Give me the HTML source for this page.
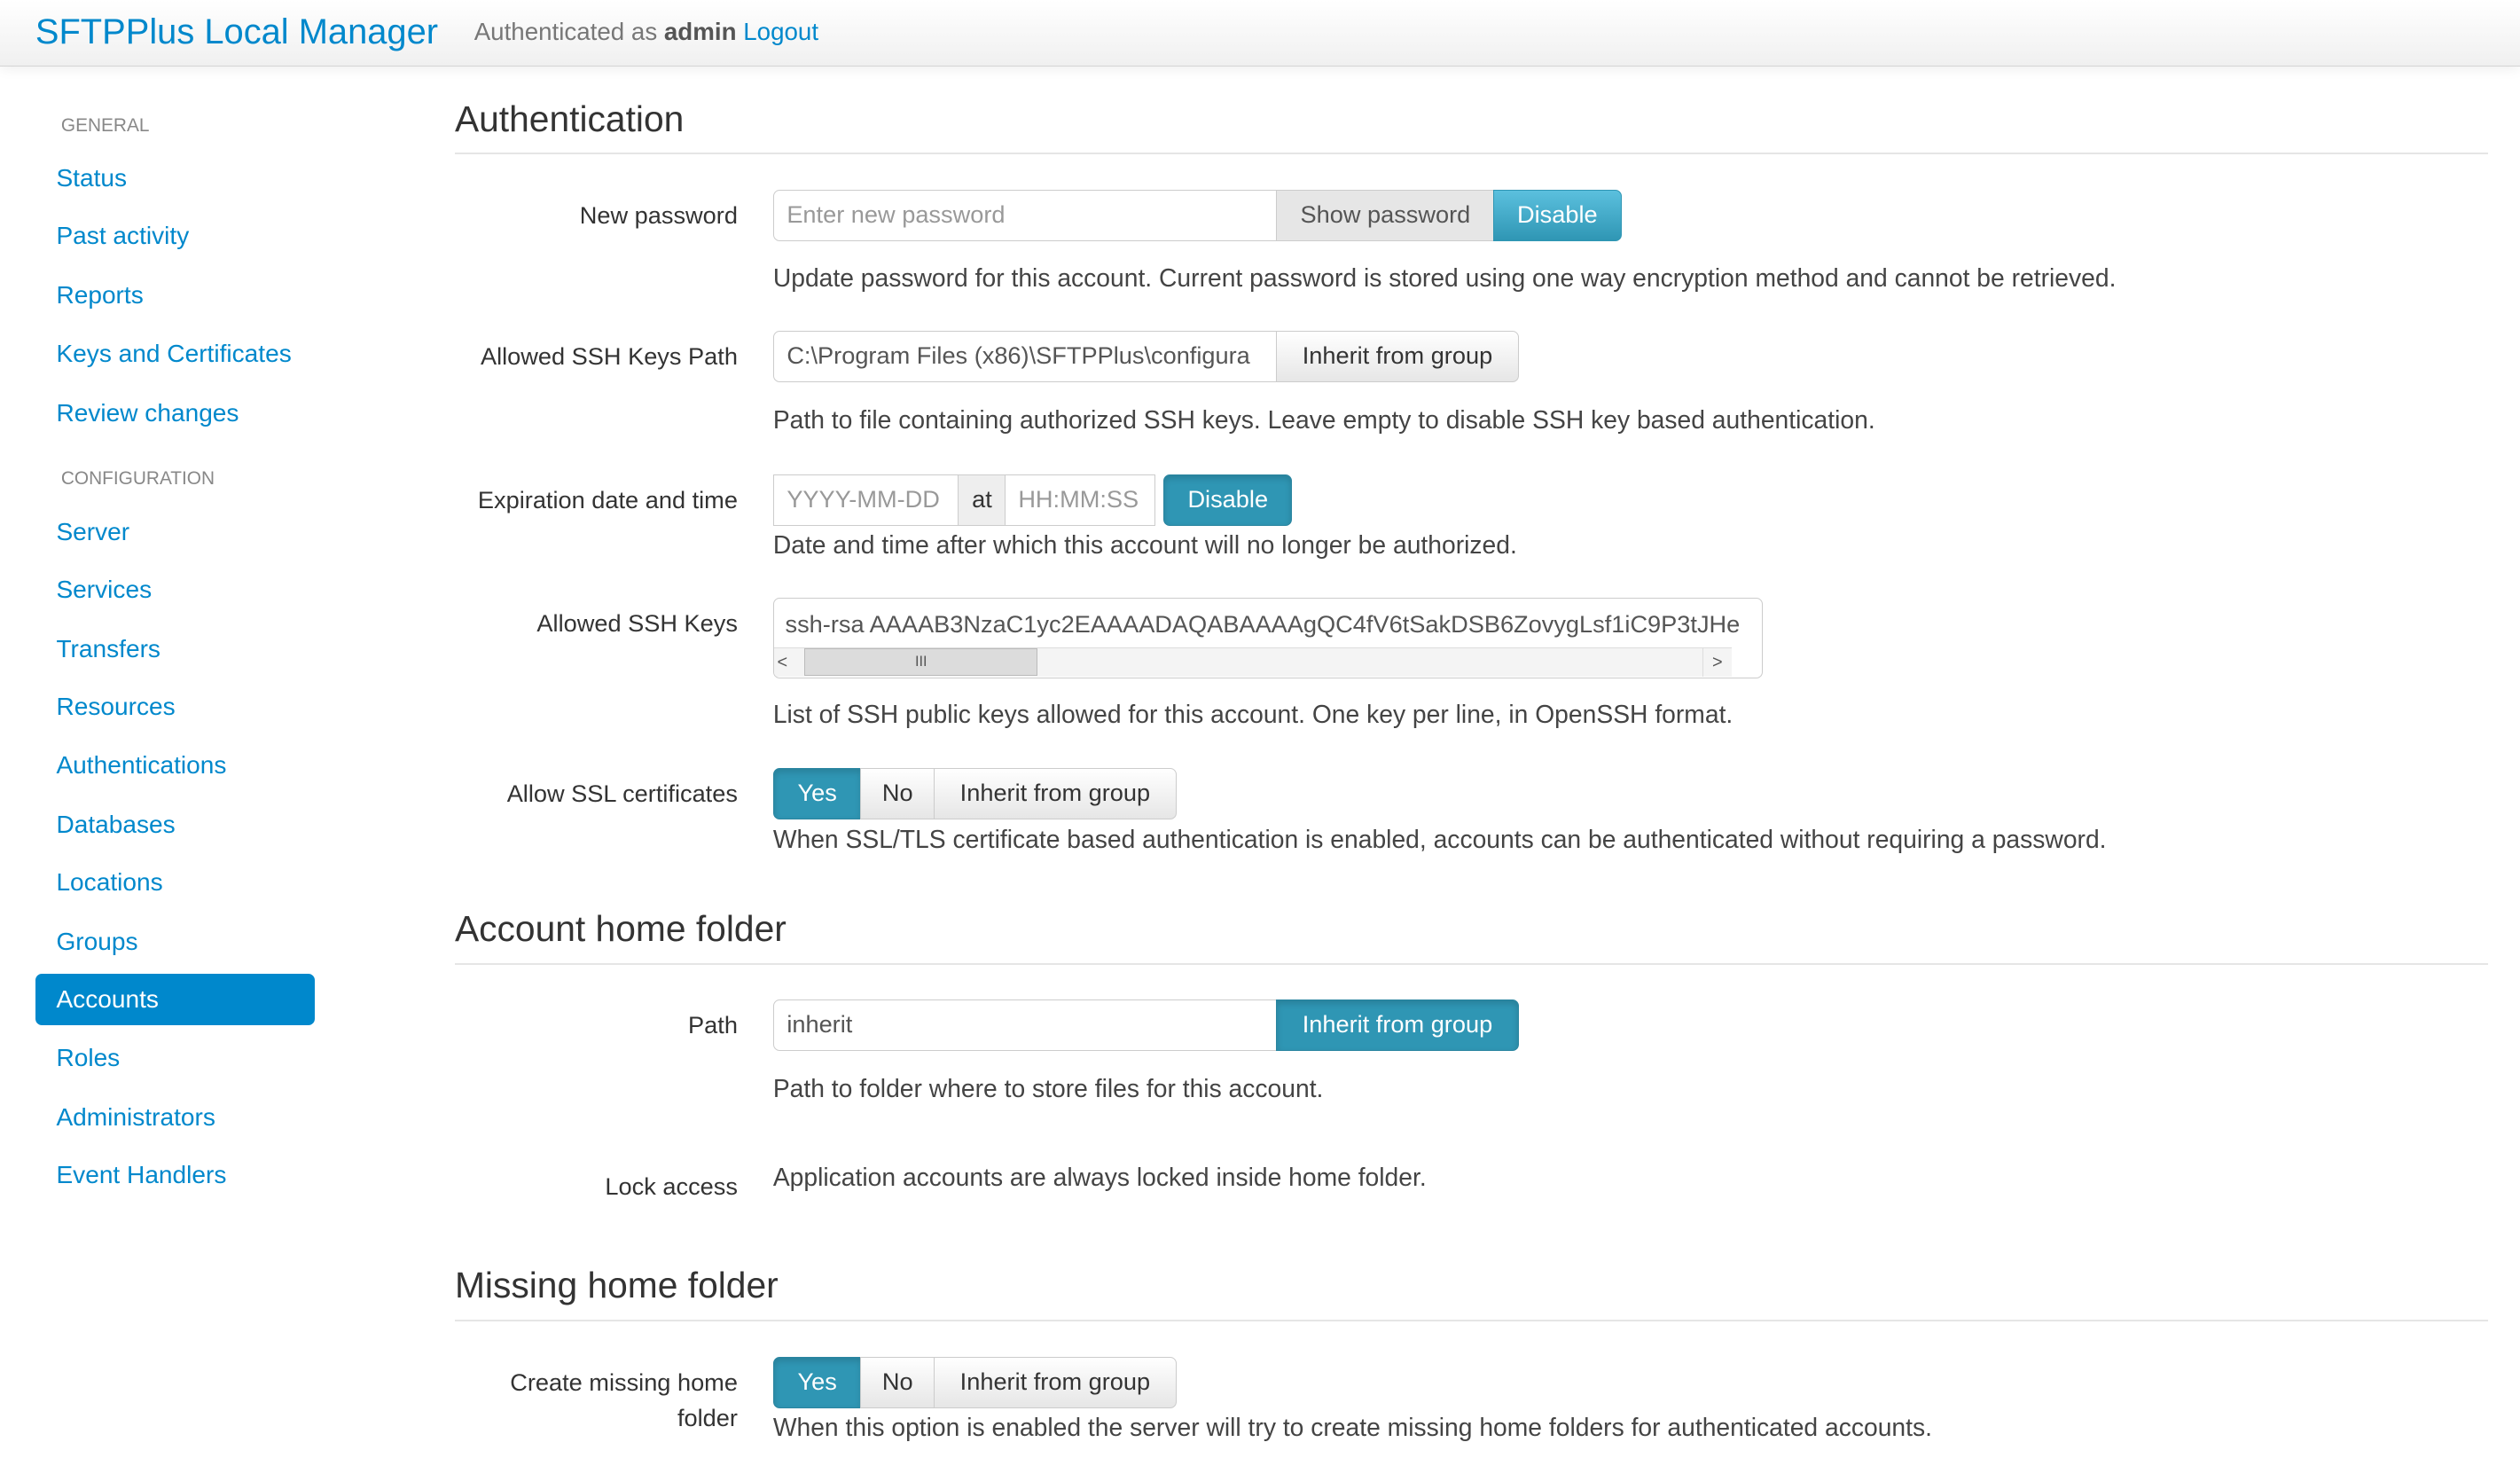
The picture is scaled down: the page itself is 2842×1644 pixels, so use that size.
<!DOCTYPE html>
<html><head><meta charset="utf-8"><style>
html,body{margin:0;padding:0;background:#fff;overflow:hidden}
body{width:1568px;height:907px;zoom:1.8125;position:relative;font-family:"Liberation Sans",Arial,sans-serif;font-size:15px;color:#333}
.a{position:absolute;white-space:nowrap}
.hdr{position:absolute;left:0;top:0;width:1568px;height:41px;background:linear-gradient(#fff,#f0f0f0);border-bottom:1px solid #d4d4d4;box-shadow:0 1px 8px rgba(0,0,0,.08)}
.nav{position:absolute;left:35px;color:#0088cc;line-height:20px;font-size:15.5px}
.cap{position:absolute;left:38px;color:#888;font-size:11.5px;line-height:14px}
h2{position:absolute;left:283px;margin:0;font-weight:normal;font-size:22.5px;color:#333;line-height:26px}
.hr{position:absolute;left:283px;width:1265px;height:1px;background:#e5e5e5}
.lbl{position:absolute;right:1109px;text-align:right;line-height:20px;white-space:nowrap}
.help{position:absolute;left:481px;line-height:20px;white-space:nowrap;color:#444;font-size:15.6px}
.box{position:absolute;box-sizing:border-box;height:32px;line-height:30px;padding:0 8px;border:1px solid #ccc;white-space:nowrap;overflow:hidden}
.inp{background:#fff;border-radius:4px 0 0 4px;color:#555}
.ph{color:#999}
.btn{background:linear-gradient(#fff,#e6e6e6);text-align:center;color:#333;padding:0}
.bi{background:linear-gradient(#5bc0de,#2f96b4);border-color:#2f96b4;color:#fff;text-align:center;padding:0}
.bia{background:#2f96b4;border-color:#2a85a0;color:#fff;text-align:center;padding:0;box-shadow:inset 0 2px 4px rgba(0,0,0,.15)}
</style></head><body>
<div class="hdr"></div>
<div class="a" style="left:22px;top:7px;font-size:22px;color:#0088cc;line-height:26px">SFTPPlus Local Manager</div>
<div class="a" style="left:295px;top:11px;color:#777;line-height:18px;font-size:15.3px">Authenticated as <b style="color:#555">admin</b> <span style="color:#0088cc">Logout</span></div>

<div class="cap" style="top:71px">GENERAL</div>
<div class="nav" style="top:101px">Status</div>
<div class="nav" style="top:137px">Past activity</div>
<div class="nav" style="top:174px">Reports</div>
<div class="nav" style="top:210px">Keys and Certificates</div>
<div class="nav" style="top:247px">Review changes</div>
<div class="cap" style="top:291px">CONFIGURATION</div>
<div class="nav" style="top:321px">Server</div>
<div class="nav" style="top:357px">Services</div>
<div class="nav" style="top:394px">Transfers</div>
<div class="nav" style="top:430px">Resources</div>
<div class="nav" style="top:466px">Authentications</div>
<div class="nav" style="top:503px">Databases</div>
<div class="nav" style="top:539px">Locations</div>
<div class="nav" style="top:576px">Groups</div>
<div class="a" style="left:22px;top:606px;width:174px;height:32px;background:#0088cc;border-radius:4px"></div>
<div class="nav" style="top:612px;color:#fff">Accounts</div>
<div class="nav" style="top:648px">Roles</div>
<div class="nav" style="top:685px">Administrators</div>
<div class="nav" style="top:721px">Event Handlers</div>

<h2 style="top:61px">Authentication</h2>
<div class="hr" style="top:95px"></div>

<div class="lbl" style="top:124px">New password</div>
<div class="box inp" style="left:481px;top:118px;width:314px"><span class="ph">Enter new password</span></div>
<div class="box btn" style="left:794px;top:118px;width:136px;background:#e6e6e6;color:#555">Show password</div>
<div class="box bi" style="left:929px;top:118px;width:80px;border-radius:0 4px 4px 0">Disable</div>
<div class="help" style="top:163px">Update password for this account. Current password is stored using one way encryption method and cannot be retrieved.</div>

<div class="lbl" style="top:212px">Allowed SSH Keys Path</div>
<div class="box inp" style="left:481px;top:206px;width:314px;padding-right:2px">C:\Program Files (x86)\SFTPPlus\configura</div>
<div class="box btn" style="left:794px;top:206px;width:151px;border-radius:0 4px 4px 0">Inherit from group</div>
<div class="help" style="top:251px">Path to file containing authorized SSH keys. Leave empty to disable SSH key based authentication.</div>

<div class="lbl" style="top:301px">Expiration date and time</div>
<div class="box inp" style="left:481px;top:295px;width:116px;border-radius:0"><span class="ph">YYYY-MM-DD</span></div>
<div class="box" style="left:596px;top:295px;width:30px;background:#eee;text-align:center;padding:0">at</div>
<div class="box" style="left:625px;top:295px;width:94px;background:#fff"><span class="ph">HH:MM:SS</span></div>
<div class="box bia" style="left:724px;top:295px;width:80px;border-radius:4px">Disable</div>
<div class="help" style="top:329px">Date and time after which this account will no longer be authorized.</div>

<div class="lbl" style="top:378px">Allowed SSH Keys</div>
<div class="a" style="left:481px;top:372px;width:616px;height:50px;box-sizing:border-box;border:1px solid #ccc;border-radius:4px;background:#fff;overflow:hidden">
 <div class="a" style="left:7px;top:6px;width:602px;overflow:hidden;line-height:20px;color:#555">ssh-rsa AAAAB3NzaC1yc2EAAAADAQABAAAAgQC4fV6tSakDSB6ZovygLsf1iC9P3tJHe</div>
 <div class="a" style="left:0;top:30px;width:596px;height:18px;border-top:1px solid #ddd;background:#f4f4f4">
  <div class="a" style="left:2px;top:0;font-size:11px;line-height:18px;color:#555">&lt;</div>
  <div class="a" style="left:19px;top:0;width:144px;height:16px;background:#dcdcdc;border:1px solid #bbb;text-align:center;font-size:9px;line-height:16px;color:#555">III</div>
  <div class="a" style="left:578px;top:0;width:17px;height:18px;border-left:1px solid #ddd;font-size:11px;line-height:18px;text-align:center;color:#555">&gt;</div>
 </div>
</div>
<div class="help" style="top:434px">List of SSH public keys allowed for this account. One key per line, in OpenSSH format.</div>

<div class="lbl" style="top:484px">Allow SSL certificates</div>
<div class="box bia" style="left:481px;top:478px;width:55px;border-radius:4px 0 0 4px">Yes</div>
<div class="box btn" style="left:535px;top:478px;width:47px">No</div>
<div class="box btn" style="left:581px;top:478px;width:151px;border-radius:0 4px 4px 0">Inherit from group</div>
<div class="help" style="top:512px">When SSL/TLS certificate based authentication is enabled, accounts can be authenticated without requiring a password.</div>

<h2 style="top:565px">Account home folder</h2>
<div class="hr" style="top:599px"></div>

<div class="lbl" style="top:628px">Path</div>
<div class="box inp" style="left:481px;top:622px;width:314px">inherit</div>
<div class="box bia" style="left:794px;top:622px;width:151px;border-radius:0 4px 4px 0">Inherit from group</div>
<div class="help" style="top:667px">Path to folder where to store files for this account.</div>

<div class="lbl" style="top:728px">Lock access</div>
<div class="help" style="top:722px">Application accounts are always locked inside home folder.</div>

<h2 style="top:787px">Missing home folder</h2>
<div class="hr" style="top:821px"></div>

<div class="lbl" style="top:850px">Create missing home</div>
<div class="lbl" style="top:872px">folder</div>
<div class="box bia" style="left:481px;top:844px;width:55px;border-radius:4px 0 0 4px">Yes</div>
<div class="box btn" style="left:535px;top:844px;width:47px">No</div>
<div class="box btn" style="left:581px;top:844px;width:151px;border-radius:0 4px 4px 0">Inherit from group</div>
<div class="help" style="top:878px">When this option is enabled the server will try to create missing home folders for authenticated accounts.</div>
</body></html>
